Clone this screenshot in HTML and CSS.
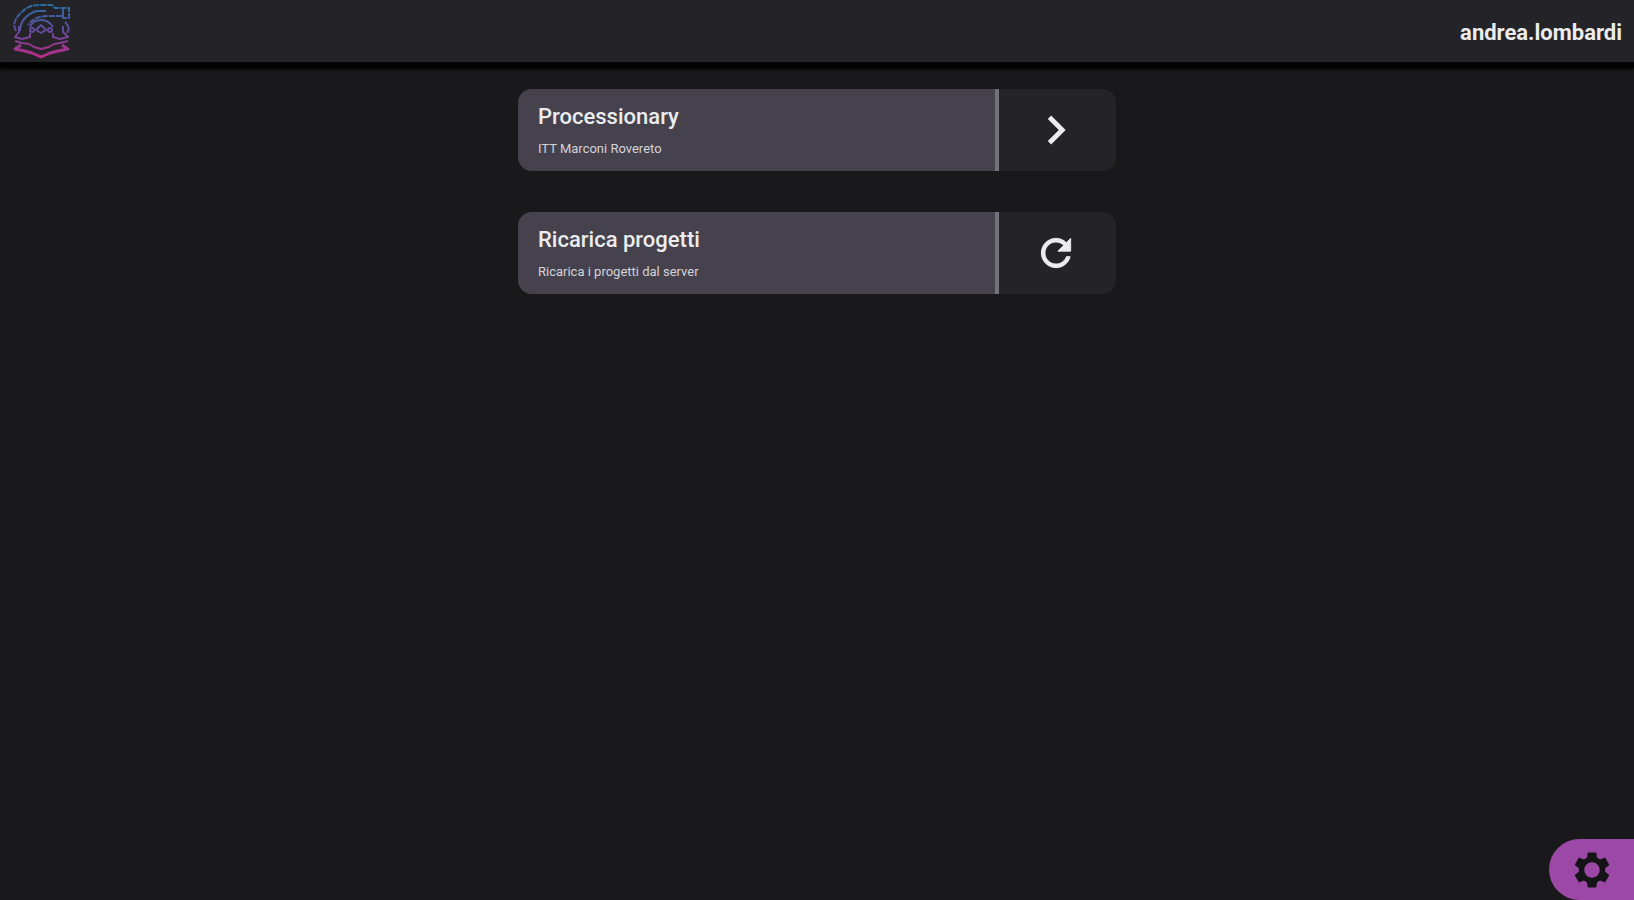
FILE: index.html
```html
<!DOCTYPE html>
<html lang="it">
<head>
    <meta charset="UTF-8">
    <meta name="viewport" content="width=device-width, initial-scale=1.0">
    <title>Progetti</title>
    <link rel="stylesheet" href="styles.css">
</head>
<body>
<header class="navbar">
    <a href="#" class="logo" aria-label="Home">
        <svg viewBox="0 0 60 58" fill="none" stroke="url(#logoGradient)" stroke-width="2" stroke-linejoin="round">
            <defs>
                <linearGradient id="logoGradient" gradientUnits="userSpaceOnUse" x1="0" y1="2" x2="0" y2="57">
                    <stop offset="0" stop-color="#276c9f"/>
                    <stop offset="0.5" stop-color="#67489a"/>
                    <stop offset="1" stop-color="#bd2b84"/>
                </linearGradient>
            </defs>
            <!-- helmet -->
            <path d="M4 29C1 24 2 18 7 13C12 7 18 3 27 3H40L43 6H57V16H51V14H41C29 14 22 15 16 23" stroke-dasharray="6 1"/>
            <path d="M51 6V16M8 29C8 20 14 12 25 9H34M53 20C57 24 58 27 55 31"/>
            <!-- face -->
            <path d="M18 25C20 20 24 18 29 18C34 18 38 20 41 25M29 23L24 28L29 31L34 28Z"/>
            <circle cx="20" cy="28" r="2"/>
            <circle cx="38" cy="28" r="2"/>
            <!-- layers -->
            <path d="M7 24V30L3 35L10 37L18 35V31M51 24V30L56 35L48 37L41 35V31"/>
            <path d="M3 39L10 41L17 42L22 45L29 47L37 45L42 42L48 41L56 39"/>
            <path d="M9 43L3 47L13 49L20 51L29 55L38 51L46 49L56 47L50 43" stroke-width="3"/>
        </svg>
    </a>
    <span class="username">andrea.lombardi</span>
</header>

<main class="projects">
    <div class="card">
        <div class="card-info">
            <h2>Processionary</h2>
            <p>ITT Marconi Rovereto</p>
        </div>
        <button type="button" class="card-button" aria-label="Apri progetto">
            <svg class="icon-chevron" viewBox="0 0 24 24"><path d="M10 6L8.59 7.41 13.17 12l-4.58 4.59L10 18l6-6z"/></svg>
        </button>
    </div>

    <div class="card">
        <div class="card-info">
            <h2>Ricarica progetti</h2>
            <p>Ricarica i progetti dal server</p>
        </div>
        <button type="button" class="card-button" aria-label="Ricarica">
            <svg class="icon" viewBox="0 0 24 24" stroke="currentColor" stroke-width="0.5"><path d="M17.65 6.35C16.2 4.9 14.21 4 12 4c-4.42 0-7.99 3.58-7.99 8s3.57 8 7.99 8c3.73 0 6.84-2.55 7.73-6h-2.08c-.82 2.33-3.04 4-5.65 4-3.31 0-6-2.69-6-6s2.69-6 6-6c1.66 0 3.14.69 4.22 1.78L13 11h7V4l-2.35 2.35z"/></svg>
        </button>
    </div>
</main>

<button type="button" class="settings-button" aria-label="Impostazioni">
    <svg class="icon" viewBox="0 0 24 24"><path d="M19.14 12.94c.04-.3.06-.61.06-.94 0-.32-.02-.64-.07-.94l2.03-1.58c.18-.14.23-.41.12-.61l-1.92-3.32c-.12-.22-.37-.29-.59-.22l-2.39.96c-.5-.38-1.03-.7-1.62-.94l-.36-2.54c-.04-.24-.24-.41-.48-.41h-3.84c-.24 0-.43.17-.47.41l-.36 2.54c-.59.24-1.13.57-1.62.94l-2.39-.96c-.22-.08-.47 0-.59.22L2.74 8.87c-.12.21-.08.47.12.61l2.03 1.58c-.05.3-.09.63-.09.94s.02.64.07.94l-2.03 1.58c-.18.14-.23.41-.12.61l1.92 3.32c.12.22.37.29.59.22l2.39-.96c.5.38 1.03.7 1.62.94l.36 2.54c.05.24.24.41.48.41h3.84c.24 0 .44-.17.47-.41l.36-2.54c.59-.24 1.13-.56 1.62-.94l2.39.96c.22.08.47 0 .59-.22l1.92-3.32c.12-.22.07-.47-.12-.61l-2.01-1.58zM12 16.2c-2.32 0-4.2-1.88-4.2-4.2s1.88-4.2 4.2-4.2 4.2 1.88 4.2 4.2-1.88 4.2-4.2 4.2z"/></svg>
</button>
</body>
</html>
```

FILE: styles.css
```css
* { box-sizing: border-box; }
body { margin: 0; min-height: 100vh; background: #19191b; color: #ececee; font-family: Roboto, sans-serif; }
button { padding: 0; border: none; cursor: pointer; }
svg { display: block; fill: currentColor; }

.navbar { display: flex; justify-content: space-between; align-items: center; height: 68px; padding: 0 12px; background: #242328; border-bottom: 6px solid #030304; box-shadow: 0 1px 4px #000; }
.logo svg { width: 60px; height: 58px; fill: none; }
.username { padding-top: 4px; font-size: 22px; font-weight: 700; line-height: 28px; }

.projects { display: flex; flex-direction: column; gap: 41px; width: 100%; max-width: 598px; margin: 0 auto; padding: 21px 0; }
.card { display: flex; height: 82px; border-radius: 14px; overflow: hidden; background: #242328; }
.card-info { flex: 1; padding: 14px 20px; background: #45424e; border-right: 4px solid #737278; }
.card-info h2 { margin: 0; font-size: 22px; font-weight: 500; line-height: 28px; }
.card-info p { margin: 8px 0 0; font-size: 13px; line-height: 20px; color: #d4d3d8; }
.card-button { display: flex; justify-content: center; align-items: center; width: 117px; padding-right: 4px; background: #242328; color: #ececee; }

.icon { width: 44px; height: 44px; }
.icon-chevron { width: 58px; height: 58px; }

.settings-button { position: fixed; right: 0; bottom: 0; display: flex; justify-content: center; align-items: center; width: 85px; height: 61px; border-radius: 32px 0 0 32px; background: #9c48a6; color: #141416; }
```
